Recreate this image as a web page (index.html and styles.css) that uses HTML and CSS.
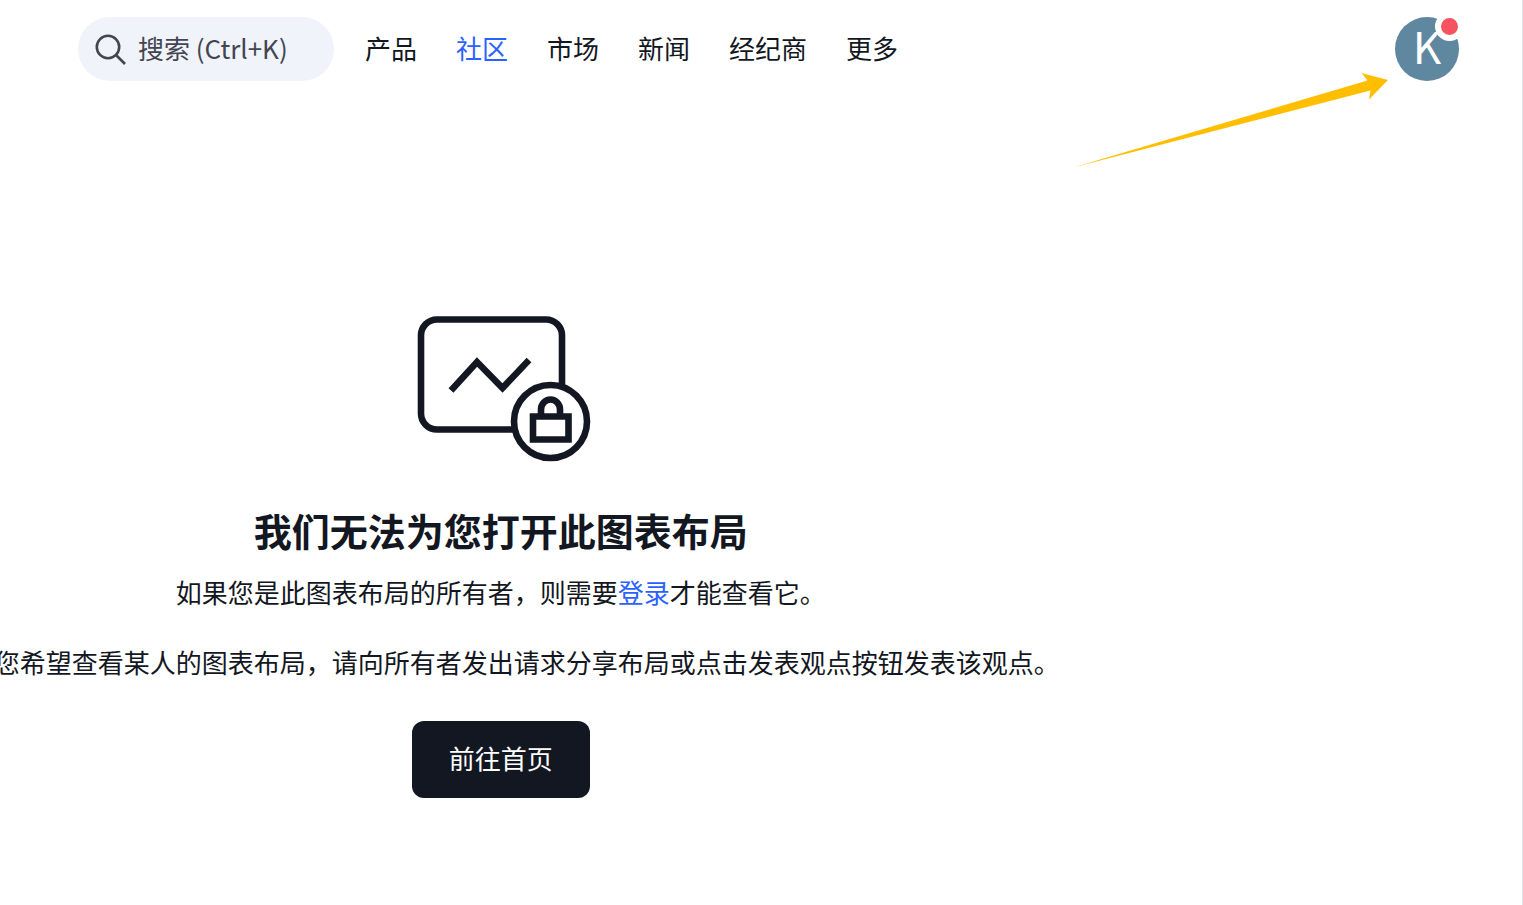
FILE: index.html
```html
<!DOCTYPE html>
<html lang="zh-CN">
<head>
<meta charset="utf-8">
<meta name="viewport" content="width=device-width, initial-scale=1">
<title>我们无法为您打开此图表布局</title>
<link rel="stylesheet" href="styles.css">
</head>
<body>
<div class="page">
  <header class="header">
    <button class="search" type="button">
      <svg class="search-icon" viewBox="0 0 32 32" aria-hidden="true"><circle cx="14" cy="14" r="11.2"/><path d="M22 22 31 31"/></svg>
      <span class="search-label">搜索 (Ctrl+K)</span>
    </button>
    <nav class="nav">
      <a class="nav-link" href="#">产品</a>
      <a class="nav-link nav-link-active" href="#">社区</a>
      <a class="nav-link" href="#">市场</a>
      <a class="nav-link" href="#">新闻</a>
      <a class="nav-link" href="#">经纪商</a>
      <a class="nav-link" href="#">更多</a>
    </nav>
    <div class="account">
      <button class="avatar" type="button">K</button>
      <span class="badge"></span>
      <svg class="arrow" viewBox="1073 72 316 96" aria-hidden="true"><path d="M1073 167.500 1367.500 80.500 1361.500 73 1388 80 1369 99.500 1370.500 90.500Z"/></svg>
    </div>
  </header>
  <main class="main">
    <svg class="illustration" viewBox="411 315 180 147" aria-hidden="true">
      <path d="M514 429.500H437A16 16 0 0 1 421 413.500V335.500A16 16 0 0 1 437 319.500H546A16 16 0 0 1 562 335.500V386"/>
      <path d="M451 390.500 477 362 502.500 388 529 360"/>
      <circle cx="550.500" cy="421.500" r="36.500"/>
      <path d="M533 416.500H568.500V439.500H533ZM541 416V409.500A9.500 10 0 0 1 560 409.500V416"/>
    </svg>
    <h1 class="title">我们无法为您打开此图表布局</h1>
    <p class="text">如果您是此图表布局的所有者，则需要<a class="link" href="#">登录</a>才能查看它。</p>
    <p class="text">如果您希望查看某人的图表布局，请向所有者发出请求分享布局或点击发表观点按钮发表该观点。</p>
    <a class="home" href="#">前往首页</a>
  </main>
</div>
</body>
</html>
```

FILE: styles.css
```css
* {
  box-sizing: border-box;
}

body {
  margin: 0;
  overflow-x: hidden;
  background: #fff;
  color: #131722;
  font-family: "Noto Sans CJK SC", sans-serif;
  font-size: 26px;
  line-height: 40px;
}

a {
  color: inherit;
  text-decoration: none;
}

button {
  border: 0;
  font: inherit;
  cursor: pointer;
}

.page {
  min-height: 100vh;
  border-right: 1px solid #e0e3eb;
}

.header {
  display: flex;
  align-items: center;
  padding: 17px 63px 16px 78px;
}

.search {
  display: flex;
  align-items: center;
  gap: 12px;
  width: 256px;
  height: 64px;
  padding: 0 16px;
  border-radius: 32px;
  background: #f0f3fa;
  color: #434651;
  white-space: nowrap;
}

.search-icon {
  flex: none;
  width: 32px;
  height: 32px;
  fill: none;
  stroke: #434651;
  stroke-width: 2.6;
}

.search-label {
  padding-bottom: 3px;
}

.nav {
  display: flex;
  gap: 39px;
  margin-left: 31px;
  padding-bottom: 3px;
  white-space: nowrap;
}

.nav-link-active,
.link {
  color: #2962ff;
}

.account {
  position: relative;
  margin-left: auto;
}

.avatar {
  display: block;
  width: 64px;
  height: 64px;
  padding: 0 0 8px;
  border-radius: 50%;
  background: #6087a0;
  color: #fff;
  font-size: 44px;
  line-height: 56px;
}

.badge {
  position: absolute;
  top: -5px;
  right: -5px;
  width: 29px;
  height: 29px;
  border: 6px solid #fff;
  border-radius: 50%;
  background: #f7525f;
}

.arrow {
  position: absolute;
  top: 55px;
  right: 70px;
  width: 316px;
  height: 96px;
  fill: #ffbf00;
  pointer-events: none;
}

.main {
  display: flex;
  flex-direction: column;
  align-items: center;
  padding: 218px 34.2% 64px 0;
  white-space: nowrap;
}

.illustration {
  width: 180px;
  height: 147px;
  fill: none;
  stroke: #131722;
  stroke-width: 6.6;
}

.title {
  margin: 38px 0 12px;
  font-size: 38px;
  font-weight: 700;
  line-height: 60px;
}

.text {
  margin: 0 0 30px;
}

.home {
  margin-top: 9px;
  padding: 17px 37px 20px;
  border-radius: 12px;
  background: #131722;
  color: #fff;
}
```
